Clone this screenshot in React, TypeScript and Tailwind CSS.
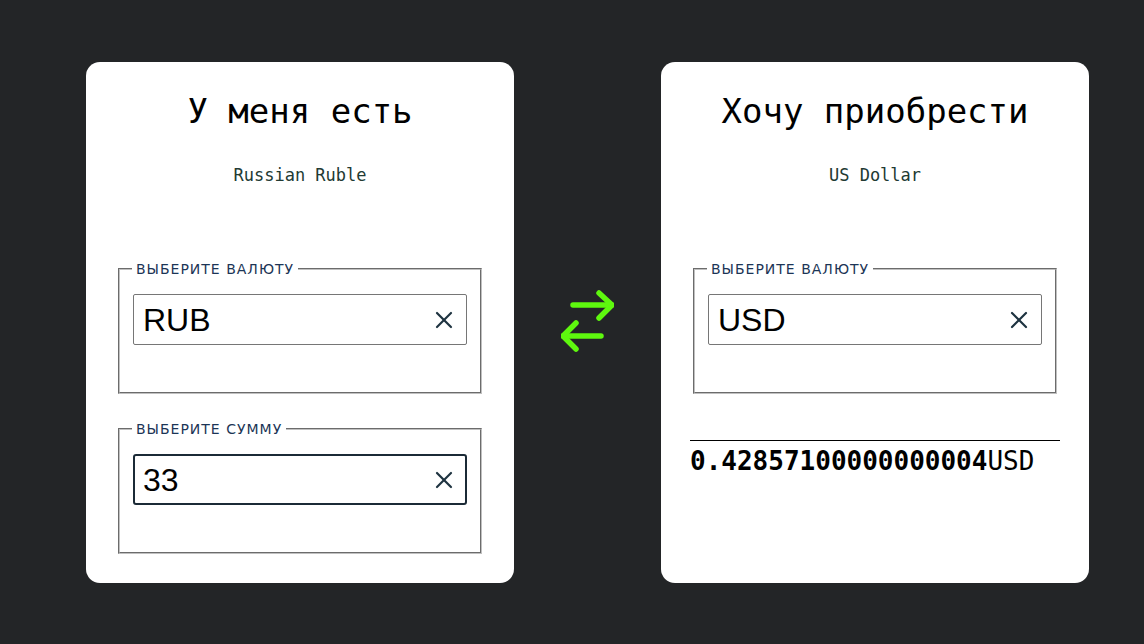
import { useState } from 'react';

const mono = "font-['DejaVu_Sans_Mono',monospace]";

function ClearIcon() {
  return (
    <svg width="18" height="18" viewBox="0 0 18 18" fill="none" stroke="#1e3340" strokeWidth="2.2" strokeLinecap="round">
      <line x1="2" y1="2" x2="16" y2="16" />
      <line x1="16" y1="2" x2="2" y2="16" />
    </svg>
  );
}

function SwapIcon() {
  return (
    <svg width="53" height="64" viewBox="0 0 53 64" fill="none" stroke="#5ef80e" strokeWidth="5.5" strokeLinecap="round" strokeLinejoin="round">
      <line x1="12" y1="15" x2="51" y2="15" />
      <polyline points="38,3 51,15 38,28" />
      <line x1="40" y1="46" x2="2" y2="46" />
      <polyline points="15,33 2,46 15,59" />
    </svg>
  );
}

function Field({ label, value, focused }: { label: string; value: string; focused?: boolean }) {
  return (
    <fieldset className="w-[364px] h-[132px] border-2 [border-style:groove] border-[#c0c0c0] px-[13px] pt-[18px]">
      <legend className="px-[4px] ml-[-1px] text-[14px] tracking-[1px] text-[#1c3556] font-['DejaVu_Sans',sans-serif] leading-none">
        {label}
      </legend>
      <div
        className={
          focused
            ? 'h-[51px] flex items-center justify-between border-2 border-[#1b2a36] rounded-[3px] pl-[8px] pr-[12px]'
            : 'h-[51px] flex items-center justify-between border border-[#767676] rounded-[2px] pl-[9px] pr-[13px]'
        }
      >
        <span className="text-[32px] text-black font-['Liberation_Sans',Arial,sans-serif] leading-none">{value}</span>
        <ClearIcon />
      </div>
    </fieldset>
  );
}

export default function App() {
  const [amount] = useState('33');
  const result = (Number(amount) * 0.012987).toString();

  return (
    <div className="min-h-screen bg-[#232527] flex items-center pl-[86px] gap-[47px]">
      <div className="w-[428px] h-[521px] bg-white rounded-[14px] flex flex-col items-center">
        <h1 className={`${mono} text-[34px] text-black mt-[29px] leading-[40px]`}>У меня есть</h1>
        <p className={`${mono} text-[17px] text-[#223a33] mt-[32px]`}>Russian Ruble</p>
        <div className="mt-[74px] flex flex-col gap-[28px]">
          <Field label="ВЫБЕРИТЕ ВАЛЮТУ" value="RUB" />
          <Field label="ВЫБЕРИТЕ СУММУ" value={amount} focused />
        </div>
      </div>

      <SwapIcon />

      <div className="w-[428px] h-[521px] bg-white rounded-[14px] flex flex-col items-center">
        <h1 className={`${mono} text-[34px] text-black mt-[29px] leading-[40px]`}>Хочу приобрести</h1>
        <p className={`${mono} text-[17px] text-[#223a33] mt-[32px]`}>US Dollar</p>
        <div className="mt-[74px]">
          <Field label="ВЫБЕРИТЕ ВАЛЮТУ" value="USD" />
        </div>
        <div className={`${mono} w-[370px] mt-[46px] border-t border-black pt-[1px] text-[26px] text-black`}>
          <span className="font-bold">{result}</span>
          <span>USD</span>
        </div>
      </div>
    </div>
  );
}
